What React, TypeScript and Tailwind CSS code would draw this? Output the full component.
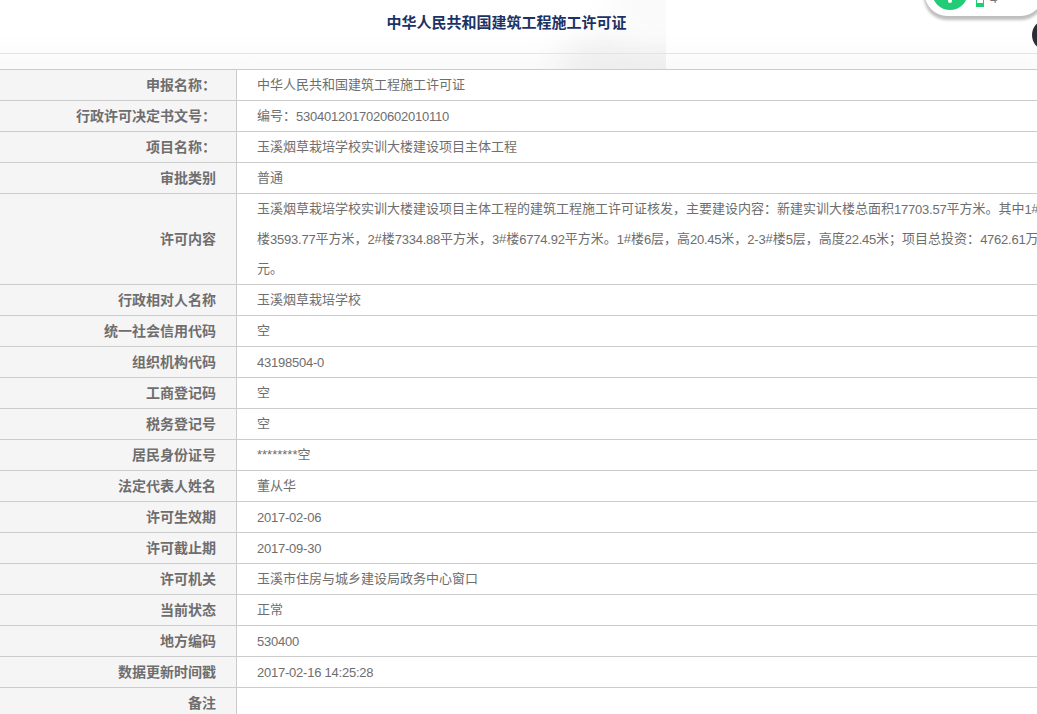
const font = "font-['Liberation_Sans','Noto_Sans_CJK_SC',sans-serif]";

const rows: [string, string][] = [
  ["申报名称：", "中华人民共和国建筑工程施工许可证"],
  ["行政许可决定书文号：", "编号：5304012017020602010110"],
  ["项目名称：", "玉溪烟草栽培学校实训大楼建设项目主体工程"],
  ["审批类别", "普通"],
];
const rows2: [string, string][] = [
  ["行政相对人名称", "玉溪烟草栽培学校"],
  ["统一社会信用代码", "空"],
  ["组织机构代码", "43198504-0"],
  ["工商登记码", "空"],
  ["税务登记号", "空"],
  ["居民身份证号", "********空"],
  ["法定代表人姓名", "董从华"],
  ["许可生效期", "2017-02-06"],
  ["许可截止期", "2017-09-30"],
  ["许可机关", "玉溪市住房与城乡建设局政务中心窗口"],
  ["当前状态", "正常"],
  ["地方编码", "530400"],
  ["数据更新时间戳", "2017-02-16 14:25:28"],
  ["备注", ""],
];

function T({ text }: { text: string }) {
  const parts = text.split(/(\d[\d.\-: ]*)/);
  return (
    <>
      {parts.map((p, i) =>
        i % 2 === 1 ? (
          <span key={i} className="align-[-1px] tracking-[-0.23px]">
            {p}
          </span>
        ) : (
          <span key={i}>{p}</span>
        ),
      )}
    </>
  );
}

function Row({ label, value }: { label: string; value: string }) {
  return (
    <div className="flex h-[31px] border-b border-[#cccccc]">
      <div className="w-[237px] shrink-0 border-r border-[#cccccc] bg-[#f6f5f6] pr-5 text-right text-sm font-bold leading-[30px]">
        {label}
      </div>
      <div className="h-[30px] w-[800px] shrink-0 overflow-hidden whitespace-nowrap pl-5 leading-[30px]">
        <T text={value} />
      </div>
    </div>
  );
}

export default function App() {
  return (
    <div className={`relative h-[714px] w-[1037px] overflow-hidden bg-white text-[13px] text-[#6e6e6e] ${font}`}>
      <div className="relative h-[69px] overflow-hidden bg-gradient-to-b from-white via-white to-[#fafafa]">
        <div className="absolute left-0 top-0 h-[69px] w-[666px] overflow-hidden">
          <div className="absolute left-[560px] top-[42px] h-[60px] w-[170px] rounded-full bg-[#eeeded] blur-[16px]" />
          <div className="absolute left-[610px] top-[-30px] h-[70px] w-[90px] rounded-full bg-[#fafafa] blur-[14px]" />
        </div>
        <div className="relative h-[54px] border-b border-[#e4e4e4] text-center text-[15px] font-bold leading-[45px] text-[#1c3264]">
          <span className="relative left-[-12px]">中华人民共和国建筑工程施工许可证</span>
        </div>
      </div>
      <div className="border-t border-[#cccccc]">
        {rows.map(([l, v]) => (
          <Row key={l} label={l} value={v} />
        ))}
        <div className="flex h-[91px] border-b border-[#cccccc]">
          <div className="flex w-[237px] shrink-0 items-center justify-end border-r border-[#cccccc] bg-[#f6f5f6] pr-5 text-sm font-bold">
            许可内容
          </div>
          <div className="w-[800px] shrink-0 overflow-hidden pl-5">
            <div className="h-[30px] whitespace-nowrap leading-[30px]">
              <T text="玉溪烟草栽培学校实训大楼建设项目主体工程的建筑工程施工许可证核发，主要建设内容：新建实训大楼总面积17703.57平方米。其中1#" />
            </div>
            <div className="h-[30px] whitespace-nowrap leading-[30px]">
              <T text="楼3593.77平方米，2#楼7334.88平方米，3#楼6774.92平方米。1#楼6层，高20.45米，2-3#楼5层，高度22.45米；项目总投资：4762.61万" />
            </div>
            <div className="h-[30px] leading-[30px]">元。</div>
          </div>
        </div>
        {rows2.map(([l, v]) => (
          <Row key={l} label={l} value={v} />
        ))}
      </div>
      <div className="absolute left-[925px] top-[-34px] flex h-[50px] w-[118px] items-end rounded-[22px] bg-white pb-[6px] pl-[7px] shadow-[0_3px_3px_1px_rgba(0,0,0,0.26)]">
        <div className="relative h-[36px] w-[36px] rounded-full bg-[#22cc77]">
          <div className="absolute bottom-[7px] left-[16px] h-[4px] w-[4px] rounded-full bg-white" />
        </div>
        <div className="mb-[3px] ml-2 h-[12px] w-2 border-x border-b-[4px] border-[#1fcf75] bg-white" />
        <div className="mb-[5px] ml-[6px] text-[13px] leading-[12px] text-[#777777]">4</div>
      </div>
      <div className="absolute left-[1032px] top-[19px] h-[32px] w-[32px] rounded-full bg-[#2b2d35]" />
    </div>
  );
}
